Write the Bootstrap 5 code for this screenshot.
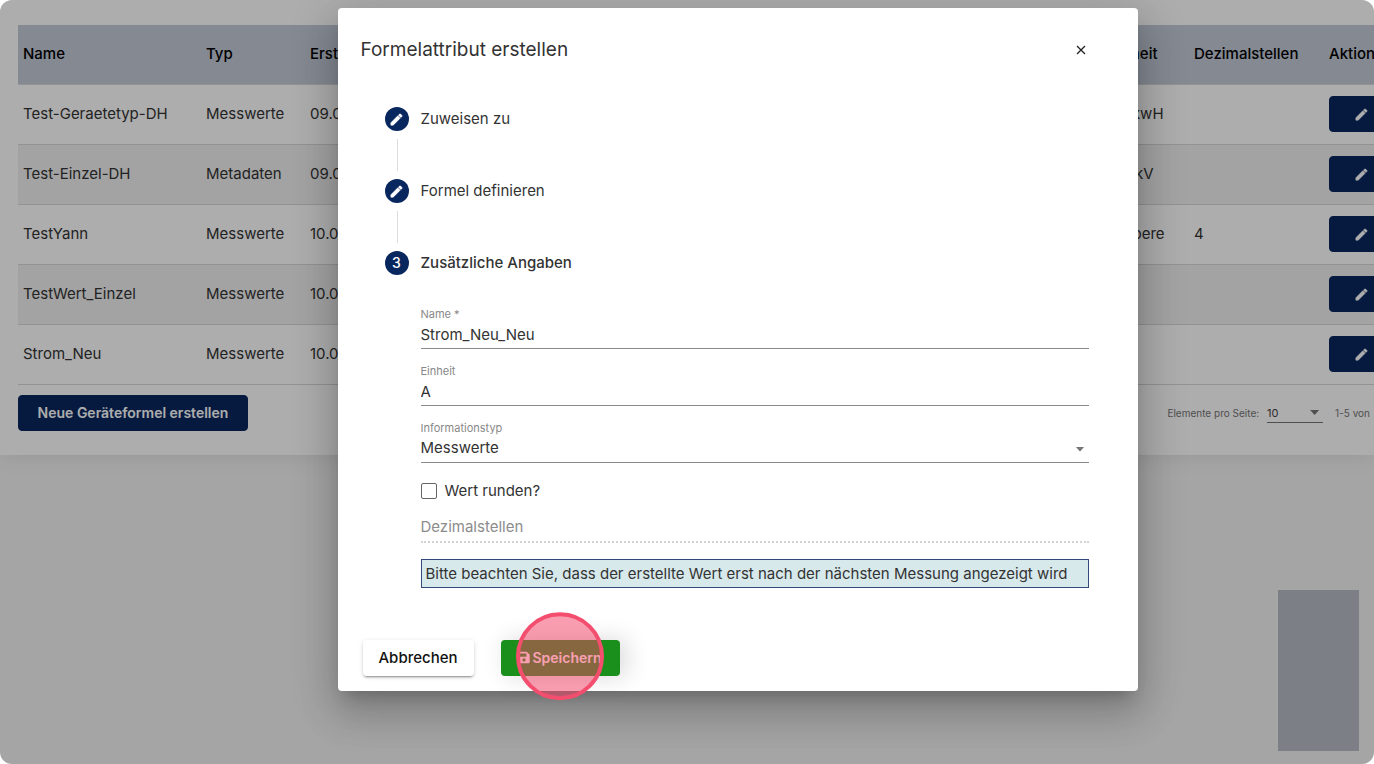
<!DOCTYPE html>
<html lang="de">
<head>
<meta charset="utf-8">
<meta name="viewport" content="width=device-width, initial-scale=1">
<title>Formelattribut erstellen</title>
<link rel="stylesheet" href="https://cdn.jsdelivr.net/npm/bootstrap@5.3.0/dist/css/bootstrap.min.css">
<style>
  body { font-family: Inter, "Open Sans", sans-serif; font-size: 15px; line-height: 20px; color: #333; background: #fff; }
  .stage { background: #f3f3f3; border-radius: 12px; }
  .panel { box-shadow: 0 2px 20px rgba(0,0,0,.08); padding: 25px 0 24px 18px; }
  .formula-table { table-layout: fixed; width: calc(100% + 60px); border-collapse: separate; border-spacing: 0; }
  .formula-table th, .formula-table td { height: 60px; padding: 0 5px 2px; vertical-align: middle; border-bottom: 1px solid #d8d8d8; white-space: nowrap; overflow: hidden; }
  .formula-table th { background: #c3cad8; color: #000; font-weight: 500; }
  .formula-table tbody tr:nth-child(even) { background: #f0f0f0; }
  .c-name { width: 183px; } .c-type { width: 104px; } .c-unit { width: 85px; } .c-dec { width: 135px; } .c-act { width: 110px; }
  .btn-navy { --bs-btn-bg: #09275f; --bs-btn-color: #fff; --bs-btn-border-color: #09275f; --bs-btn-hover-bg: #123577; --bs-btn-hover-color: #fff; --bs-btn-border-radius: 4px; font-size: 14px; font-weight: 600; height: 36px; line-height: 20px; }
  .btn-new { min-width: 230px; }
  .btn-edit { width: 64px; padding: 0; }
  .table-foot { margin-top: 10px; }
  .pager { font-size: 10px; color: #757575; }
  .pager select { width: 56px; border: 0; border-bottom: 1px solid #757575; background: transparent; appearance: none; font-size: 11px; color: #444; padding: 0; height: 20px; }
  .arrow { right: 4px; top: 50%; margin-top: -3px; width: 9px; height: 5px; background: #757575; clip-path: polygon(0 0, 100% 0, 50% 100%); pointer-events: none; }
  .side-box { width: 81px; height: 161px; right: 15px; bottom: 13px; background: #b8bcc8; }
  .shade { background: rgba(0,0,0,.32); padding: 8px 0 8px 101px; }
  .dialog-box { width: 800px; max-width: 100%; border-radius: 4px; background: #fff; padding: 24px 24px 15px 23px; box-shadow: 0 11px 15px -7px rgba(0,0,0,.2), 0 24px 38px 3px rgba(0,0,0,.14), 0 9px 46px 8px rgba(0,0,0,.12); }
  .dialog-title { font-size: 19px; line-height: 36px; font-weight: 400; }
  .btn-x { width: 24px; height: 24px; margin-right: 21px; color: #222; }
  .stepper { padding: 39px 25px 0 24px; }
  .step-head { gap: 12px; height: 24px; }
  .step-current { font-weight: 500; }
  .dot { width: 24px; height: 24px; background: #09275f; color: #fff; font-size: 14px; font-weight: 500; }
  .rail { width: 1px; height: 32px; margin: 8px 0 8px 12px; background: #ddd; }
  .step-content { margin-left: 36px; padding-top: 31px; }
  .field { height: 57px; }
  .field label { font-size: 11px; line-height: 16px; color: #888; }
  .line-input { display: block; border: 0; border-bottom: 1px solid #8a8a8a; border-radius: 0; background: transparent; appearance: none; width: 100%; height: 27px; padding: 2px 0 4px; line-height: 20px; color: #333; outline: 0; }
  .line-input:disabled { border-bottom: 2px dotted #d4d4d4; height: 30px; }
  .line-input::placeholder { color: #8c8c8c; opacity: 1; }
  .check-row { gap: 8px; height: 20px; }
  .check-row input { width: 16px; height: 16px; margin: 0; border: 1px solid #666; }
  .check-row input[type=checkbox] { border-radius: 2px; }
  .decimals { margin-top: 12px; }
  .note { margin-top: 16px; border: 1px solid #314a7b; background: #d8e9ec; height: 29px; padding: 4px; line-height: 19px; white-space: nowrap; }
  .actions { gap: 27px; margin: 52px 0 0 2px; }
  .btn-cancel, .btn-save { height: 36px; border: 0; border-radius: 4px; font-size: 15px; padding: 0; }
  .btn-cancel { width: 111px; background: #fff; color: #111; font-weight: 500; box-shadow: 0 3px 1px -2px rgba(0,0,0,.2), 0 2px 2px rgba(0,0,0,.14), 0 1px 5px rgba(0,0,0,.12); }
  .btn-save { width: 119px; gap: 2px; padding-bottom: 2px; background: #1a8f1c; color: #fff; font-weight: 600; font-size: 14px; box-shadow: 6px 0 24px rgba(0,0,0,.16); }
  .pulse { width: 88px; height: 88px; left: 50%; top: 50%; transform: translate(-50%, -52%); border: 4px solid #f44e6f; background: rgba(244,63,100,.5); pointer-events: none; }
</style>
</head>
<body>
<svg class="d-none" aria-hidden="true">
  <symbol id="pencil" viewBox="0 0 24 24"><path fill="currentColor" stroke="currentColor" stroke-width="1" stroke-linejoin="round" d="M3 17.25V21h3.75L17.81 9.94l-3.75-3.75L3 17.25zM20.71 7.04a1 1 0 0 0 0-1.41l-2.34-2.34a1 1 0 0 0-1.41 0l-1.83 1.83 3.75 3.75 1.83-1.83z"/></symbol>
  <symbol id="save" viewBox="0 0 448 512"><path fill="currentColor" d="M434 130 350 46a48 48 0 0 0-34-14H48A48 48 0 0 0 0 80v352a48 48 0 0 0 48 48h352a48 48 0 0 0 48-48V164a48 48 0 0 0-14-34zM224 416a64 64 0 1 1 0-128 64 64 0 0 1 0 128zm96-304v100a12 12 0 0 1-12 12H76a12 12 0 0 1-12-12V108a12 12 0 0 1 12-12h229z"/></symbol>
</svg>
<div class="stage position-relative overflow-hidden min-vh-100">
  <main class="panel bg-white overflow-hidden">
    <table class="formula-table">
      <colgroup><col class="c-name"><col class="c-type"><col><col class="c-unit"><col class="c-dec"><col class="c-act"></colgroup>
      <thead><tr><th>Name</th><th>Typ</th><th>Erstellt</th><th>Einheit</th><th>Dezimalstellen</th><th>Aktion</th></tr></thead>
      <tbody>
        <tr><td>Test-Geraetetyp-DH</td><td>Messwerte</td><td>09.04.</td><td>TarkwH</td><td></td><td><button class="btn btn-navy btn-edit" aria-label="Bearbeiten"><svg width="15" height="15"><use href="#pencil"/></svg></button></td></tr>
        <tr><td>Test-Einzel-DH</td><td>Metadaten</td><td>09.04.</td><td>MinkV</td><td></td><td><button class="btn btn-navy btn-edit" aria-label="Bearbeiten"><svg width="15" height="15"><use href="#pencil"/></svg></button></td></tr>
        <tr><td>TestYann</td><td>Messwerte</td><td>10.04.</td><td>Ampere</td><td>4</td><td><button class="btn btn-navy btn-edit" aria-label="Bearbeiten"><svg width="15" height="15"><use href="#pencil"/></svg></button></td></tr>
        <tr><td>TestWert_Einzel</td><td>Messwerte</td><td>10.04.</td><td></td><td></td><td><button class="btn btn-navy btn-edit" aria-label="Bearbeiten"><svg width="15" height="15"><use href="#pencil"/></svg></button></td></tr>
        <tr><td>Strom_Neu</td><td>Messwerte</td><td>10.04.</td><td></td><td></td><td><button class="btn btn-navy btn-edit" aria-label="Bearbeiten"><svg width="15" height="15"><use href="#pencil"/></svg></button></td></tr>
      </tbody>
    </table>
    <div class="table-foot d-flex justify-content-between align-items-start text-nowrap pe-1">
      <button class="btn btn-navy btn-new px-3 py-0">Neue Geräteformel erstellen</button>
      <div class="pager d-flex align-items-center pt-2">
        <label for="size" class="me-2">Elemente pro Seite:</label>
        <span class="position-relative me-2"><select id="size"><option>10</option></select><span class="arrow position-absolute"></span></span>
        <span class="ms-1">1-5 von</span>
      </div>
    </div>
  </main>
  <div class="side-box position-absolute"></div>

  <div class="shade position-absolute top-0 start-0 w-100 h-100">
    <section class="dialog-box mx-auto" role="dialog" aria-labelledby="dlg">
      <div class="d-flex justify-content-between align-items-center">
        <h1 class="dialog-title m-0" id="dlg">Formelattribut erstellen</h1>
        <button class="btn-x btn p-0 d-flex align-items-center justify-content-center" aria-label="Schließen"><svg width="10" height="10" viewBox="0 0 10 10" stroke="currentColor" stroke-width="1.3"><path d="M1 1l8 8M9 1L1 9"/></svg></button>
      </div>
      <div class="stepper">
        <div class="step-head d-flex align-items-center"><span class="dot rounded-circle d-flex align-items-center justify-content-center"><svg width="15" height="15"><use href="#pencil"/></svg></span>Zuweisen zu</div>
        <div class="rail"></div>
        <div class="step-head d-flex align-items-center"><span class="dot rounded-circle d-flex align-items-center justify-content-center"><svg width="15" height="15"><use href="#pencil"/></svg></span>Formel definieren</div>
        <div class="rail"></div>
        <div class="step-head step-current d-flex align-items-center"><span class="dot rounded-circle d-flex align-items-center justify-content-center">3</span>Zusätzliche Angaben</div>
        <form class="step-content">
          <div class="field d-flex flex-column"><label for="n">Name *</label><input id="n" class="line-input" value="Strom_Neu_Neu"></div>
          <div class="field d-flex flex-column"><label for="e">Einheit</label><input id="e" class="line-input" value="A"></div>
          <div class="field d-flex flex-column"><label for="i">Informationstyp</label><span class="position-relative"><select id="i" class="line-input"><option>Messwerte</option></select><span class="arrow position-absolute"></span></span></div>
          <div class="check-row d-flex align-items-center mt-1"><input class="form-check-input" type="checkbox" id="r"><label for="r">Wert runden?</label></div>
          <input class="line-input decimals" aria-label="Dezimalstellen" placeholder="Dezimalstellen" disabled>
          <div class="note">Bitte beachten Sie, dass der erstellte Wert erst nach der nächsten Messung angezeigt wird</div>
        </form>
      </div>
      <div class="actions d-flex">
        <button class="btn btn-cancel">Abbrechen</button>
        <div class="position-relative">
          <button class="btn btn-save d-flex align-items-center justify-content-center"><svg width="12" height="13"><use href="#save"/></svg>Speichern</button>
          <span class="pulse position-absolute rounded-circle"></span>
        </div>
      </div>
    </section>
  </div>
</div>
<script src="https://cdn.jsdelivr.net/npm/bootstrap@5.3.0/dist/js/bootstrap.bundle.min.js"></script>
</body>
</html>
